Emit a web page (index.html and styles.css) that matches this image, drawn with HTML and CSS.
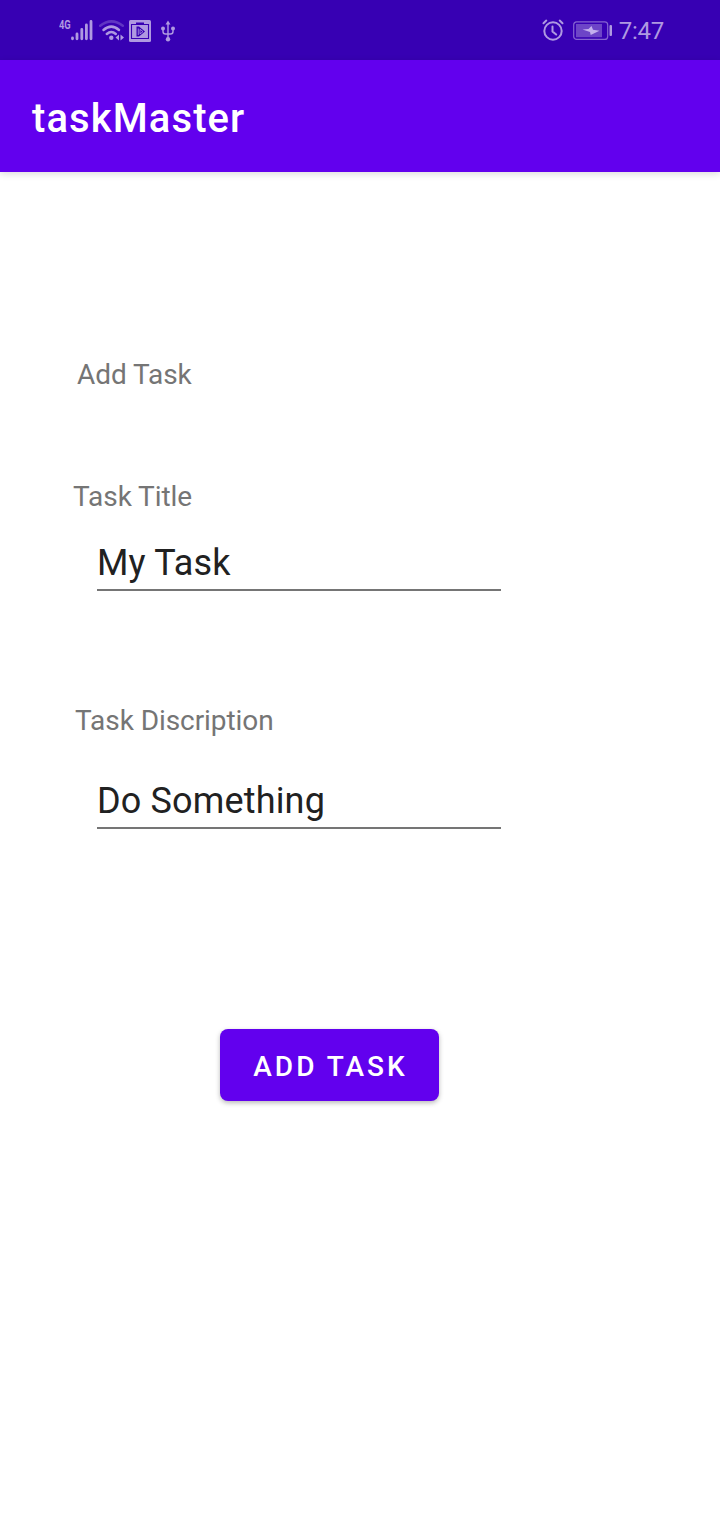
FILE: index.html
```html
<!DOCTYPE html>
<html lang="en">
<head>
<meta charset="utf-8">
<title>taskMaster</title>
<link rel="stylesheet" href="styles.css">
</head>
<body>
<div class="status-bar">
  <div class="status-group">
    <span class="network">4G</span>
    <svg class="signal" width="22" height="22" viewBox="0 0 22 22" stroke="currentColor" stroke-width="2.8" stroke-linecap="round">
      <path d="M1.500 18v.8M6 14v4.800M10.800 9.500v9.300M15.400 5v13.800M20 1.500v17.300"/>
    </svg>
    <svg class="wifi" width="26" height="22" viewBox="0 0 26 22" fill="none" stroke="currentColor" stroke-width="2.500" stroke-linecap="round">
      <path opacity=".35" d="M1.200 5.800Q12.500-3 23.800 5.800"/>
      <path d="M4.500 10Q12.300 3.200 20 10M7.800 14Q12.300 10 16.800 14"/>
      <circle cx="12.300" cy="17.800" r="2.200" fill="currentColor" stroke="none"/>
      <path fill="currentColor" stroke="none" d="M20 14.500v6l-3.500-3zM21.500 14.500v6l3.500-3z"/>
    </svg>
    <svg class="recorder" width="22" height="22" viewBox="0 0 22 22">
      <rect width="22" height="22" rx="1.500" fill="currentColor"/>
      <path d="M2.500 4.500h17v14h-17z" fill="none" stroke="#3700b3" stroke-width="1.100"/>
      <path d="M7 2.500h8v1.500H7zM7.500 6.500h2.500l6 5-6 5H7.500z" fill="#3700b3"/>
      <path d="M9.300 8.500v6.500M11 9.300l3 2.300-3 2.300z" fill="none" stroke="currentColor" stroke-width=".8"/>
    </svg>
    <svg class="usb" width="14" height="22" viewBox="0 0 14 22" fill="none" stroke="currentColor" stroke-width="1.400">
      <path d="M7 3v16M2 8v3.500Q2 14 4.500 14H9.500Q12 14 12 11.500V8"/>
      <path fill="currentColor" stroke="none" d="M7 .5l2.500 4H4.500z"/>
      <g fill="currentColor" stroke="none"><circle cx="2" cy="8.500" r="2"/><circle cx="12" cy="8.500" r="2"/><circle cx="7" cy="19.300" r="2.200"/></g>
    </svg>
  </div>
  <div class="status-group">
    <svg class="alarm" width="22" height="22" viewBox="0 0 22 22" fill="none" stroke="currentColor" stroke-width="2" stroke-linecap="round">
      <circle cx="11" cy="12" r="8.700"/>
      <path d="M10.500 7.500v5l3.700 3M1.500 4.200L4.300 1.600M20.500 4.200L17.700 1.600"/>
    </svg>
    <svg class="battery" width="40" height="20" viewBox="0 0 40 20">
      <rect x=".7" y=".9" width="34" height="17.500" rx="3" fill="none" stroke="currentColor" stroke-width="1.200" opacity=".65"/>
      <rect x="3" y="3" width="26" height="13.200" fill="currentColor" opacity=".45"/>
      <path d="M9.500 8.500L17 11 17.700 14 26.500 9.800 20 8.700 18.500 5 15.500 8z" fill="#c4b0ee"/>
      <rect x="36.500" y="4" width="2.500" height="11" rx="1" fill="currentColor"/>
    </svg>
    <span class="clock">7:47</span>
  </div>
</div>
<header class="app-bar"><h1 class="app-title">taskMaster</h1></header>
<main class="form">
  <h2 class="label heading">Add Task</h2>
  <label class="label title-label" for="title">Task Title</label>
  <input class="field" id="title" type="text" value="My Task">
  <label class="label description-label" for="description">Task Discription</label>
  <input class="field description-field" id="description" type="text" value="Do Something">
  <button class="submit" type="button">ADD TASK</button>
</main>
</body>
</html>
```
FILE: styles.css
```css
* { box-sizing: border-box; }

body {
  margin: 0;
  min-height: 1520px;
  background: #fff;
  font-family: Roboto, "Liberation Sans", sans-serif;
}

.status-bar {
  display: flex;
  justify-content: space-between;
  height: 60px;
  padding: 0 56px 0 59px;
  background: #3700b3;
  color: #af99e1;
}

.status-group { display: flex; align-items: flex-start; }

.network {
  width: 12px;
  margin-top: 18px;
  font-size: 12px;
  line-height: 14px;
  font-weight: 700;
  transform: scaleX(.78);
  transform-origin: left;
}

.signal { margin-top: 20px; }
.wifi { margin: 20px 0 0 6px; }
.recorder { margin: 20px 0 0 4px; }
.usb { margin: 20px 0 0 10px; }
.alarm { margin-top: 19px; }
.battery { margin: 21px 0 0 9px; }

.clock {
  margin: 17px 0 0 6px;
  font-size: 24px;
  line-height: 28px;
  letter-spacing: -.25px;
}

.app-bar {
  height: 112px;
  padding: 35px 32px 0;
  background: #6200ee;
  box-shadow: 0 2px 7px rgba(0, 0, 0, .14);
}

.app-title {
  margin: 0;
  color: #fff;
  font-size: 40px;
  line-height: 47px;
  font-weight: 500;
  letter-spacing: 1.1px;
}

.form {
  display: flex;
  flex-direction: column;
  align-items: flex-start;
  padding-top: 186px;
}

.label {
  margin: 0;
  color: #757575;
  font-size: 28px;
  line-height: 33px;
  font-weight: 400;
  letter-spacing: -.07px;
}

.heading { margin-left: 77px; }
.title-label { margin: 89px 0 0 73px; }
.description-label { margin: 113px 0 0 75px; }

.field {
  width: 404px;
  height: 49px;
  margin: 29px 0 0 97px;
  padding: 0 0 5px;
  border: 0;
  border-bottom: 2px solid #757575;
  outline: 0;
  background: none;
  color: #212121;
  font: 400 36px/42px Roboto, "Liberation Sans", sans-serif;
  letter-spacing: .16px;
}

.description-field { margin-top: 43px; }

.submit {
  width: 219px;
  height: 72px;
  margin: 200px 0 0 220px;
  padding: 3px 0 0 2px;
  border: 0;
  border-radius: 8px;
  background: #6200ee;
  box-shadow: 0 2px 5px rgba(0, 0, 0, .28);
  color: #fff;
  font: 500 28px/33px Roboto, "Liberation Sans", sans-serif;
  letter-spacing: 3px;
}
```
